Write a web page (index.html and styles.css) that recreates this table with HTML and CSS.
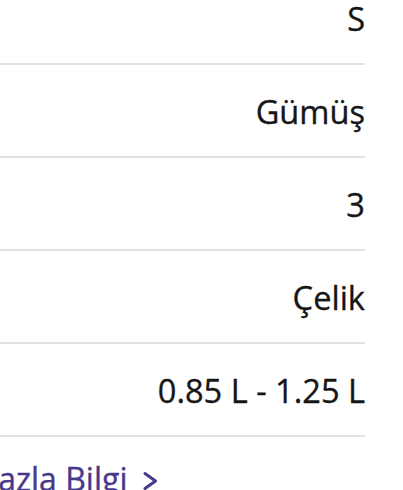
FILE: index.html
```html
<!DOCTYPE html>
<html lang="tr">
<head>
<meta charset="utf-8">
<title>Özellikler</title>
<link rel="stylesheet" href="styles.css">
</head>
<body>
<div class="specs">
  <div class="row"><span class="value">S</span></div>
  <div class="row"><span class="value">Gümüş</span></div>
  <div class="row"><span class="value">3</span></div>
  <div class="row"><span class="value">Çelik</span></div>
  <div class="row"><span class="value">0.85 L - 1.25 L</span></div>
</div>
<a class="more" href="#">
  <span>Daha Fazla Bilgi</span>
  <svg class="chev" width="17" height="20" viewBox="0 0 17 20"><polyline points="3,2.5 13.5,10 3,17.5" fill="none" stroke="currentColor" stroke-width="3" stroke-linecap="round" stroke-linejoin="round"/></svg>
</a>
</body>
</html>
```
FILE: styles.css
```css
html, body {
  margin: 0;
  padding: 0;
  background: #ffffff;
}
body {
  font-family: "Open Sans", "Liberation Sans", sans-serif;
  overflow: hidden;
  width: 403px;
  height: 490px;
}
.specs {
  width: 365px;
  margin-top: -28px;
}
.row {
  height: 91px;
  display: flex;
  justify-content: flex-end;
  align-items: center;
  border-bottom: 2px solid #e2e2e2;
  box-sizing: content-box;
}
.value {
  font-size: 32.6px;
  color: #161616;
  padding-top: 2px;
  -webkit-text-stroke: 0.35px #161616;
}
.more {
  display: flex;
  align-items: center;
  gap: 15px;
  margin-top: 20px;
  margin-left: -105px;
  font-size: 32px;
  color: #47398a;
  text-decoration: none;
  white-space: nowrap;
  -webkit-text-stroke: 0.35px #47398a;
}
.chev {
  flex: none;
  margin-top: 4px;
}
```
